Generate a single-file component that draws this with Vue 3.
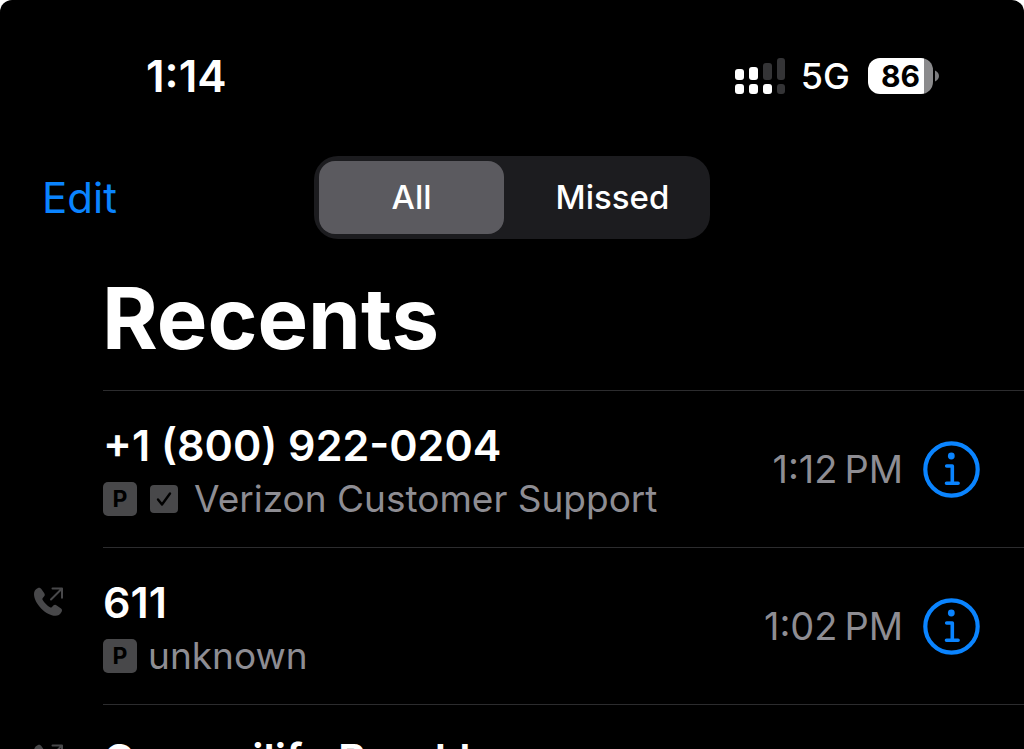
<template>
  <div class="phone">
    <!-- status bar -->
    <header class="status-bar">
      <span class="clock">1:14</span>
      <div class="status-icons">
        <svg class="signal" viewBox="0 0 50 36" role="img" aria-label="Signal strength">
          <rect x="0" y="11" width="9" height="11" rx="3" fill="#fff" />
          <rect x="14" y="9" width="9" height="13" rx="3" fill="#fff" />
          <rect x="28" y="5" width="9" height="17" rx="3" fill="#343436" />
          <rect x="42" y="0" width="8" height="22" rx="3" fill="#343436" />
          <rect x="0" y="26" width="9" height="10" rx="3" fill="#fff" />
          <rect x="14" y="26" width="9" height="10" rx="3" fill="#fff" />
          <rect x="28" y="26" width="9" height="10" rx="3" fill="#fff" />
          <rect x="42" y="26" width="8" height="10" rx="3" fill="#343436" />
        </svg>
        <span class="network">5G</span>
        <div class="battery">
          <span class="battery-level">86</span>
          <svg class="battery-tip" viewBox="0 0 4 12" aria-hidden="true">
            <path d="M0 0.5C2.4 1.4 4 3.5 4 6S2.4 10.6 0 11.5Z" fill="#7c7c7e" />
          </svg>
        </div>
      </div>
    </header>

    <nav class="toolbar">
      <button type="button" class="edit-button">Edit</button>
      <div class="segmented" role="group" aria-label="Filter calls">
        <button
          v-for="tab in tabs"
          :key="tab"
          type="button"
          class="segment"
          :class="{ active: activeTab === tab }"
          :aria-pressed="activeTab === tab"
          @click="activeTab = tab"
        >
          {{ tab }}
        </button>
      </div>
    </nav>

    <h1 class="title">Recents</h1>

    <!-- call list -->
    <ul class="call-list">
      <li v-for="call in visibleCalls" :key="call.name" class="call">
        <div class="direction">
          <svg v-if="call.outgoing" class="outgoing" viewBox="0 0 30 30" role="img" aria-label="Outgoing call">
            <path
              d="M0 7C0 4 1.5 2 4 1C5.5 .5 6.5 1 7.5 2.3L10.3 6.3C11 7.5 11 8.6 10 9.6L8.8 11C8.2 11.7 8.3 12.3 8.7 13C10 15.5 13.5 19 16 20.3C16.8 20.7 17.3 20.5 18 19.9L19.3 18.6C20.3 17.7 21.5 17.6 22.7 18.4L26.7 21.2C28.2 22.3 28.4 23.5 27.5 25C26 27.7 24 28.8 21.5 28.8C12 28.8 0 16.5 0 7Z"
              fill="#48484a"
            />
            <path
              d="M17 12.5L27.8 1.7M18.5 1.5H28V10.8"
              fill="none"
              stroke="#48484a"
              stroke-width="2"
              stroke-linecap="round"
              stroke-linejoin="round"
            />
          </svg>
        </div>
        <div class="call-body">
          <div class="call-info">
            <div class="call-name">{{ call.name }}</div>
            <div class="call-label">
              <span class="line-badge">P</span>
              <span v-if="call.verified" class="verified">
                <svg viewBox="0 0 28 28" role="img" aria-label="Verified">
                  <path
                    d="M8 14.5L12 19.5L20 8.5"
                    fill="none"
                    stroke="#000"
                    stroke-width="2.4"
                    stroke-linecap="round"
                    stroke-linejoin="round"
                  />
                </svg>
              </span>
              <span class="label-text">{{ call.label }}</span>
            </div>
          </div>
          <time class="call-time">{{ call.time }}</time>
          <button type="button" class="info-button" :aria-label="'Details for ' + call.name">
            <svg viewBox="0 0 57 57" aria-hidden="true">
              <circle cx="28.5" cy="28.5" r="26.2" fill="none" stroke="#0a84ff" stroke-width="4.2" />
              <circle cx="28.3" cy="15" r="3.4" fill="#0a84ff" />
              <path
                d="M23.7 25H29.3V42M23.5 42.3H35.1"
                fill="none"
                stroke="#0a84ff"
                stroke-width="3.6"
                stroke-linecap="round"
                stroke-linejoin="round"
              />
            </svg>
          </button>
        </div>
      </li>
    </ul>
  </div>
</template>

<script setup>
import { ref, computed } from "vue";

const tabs = ["All", "Missed"];
const activeTab = ref("All");

// thin space between the hour and AM/PM
const calls = ref([
  { name: "+1 (800) 922-0204", label: "Verizon Customer Support", time: "1:12\u2009PM", verified: true },
  { name: "611", label: "unknown", time: "1:02\u2009PM", outgoing: true },
  { name: "Comunilife Brooklyn", label: "unknown", time: "1:00\u2009PM", outgoing: true },
]);

const visibleCalls = computed(() =>
  activeTab.value === "All" ? calls.value : calls.value.filter((call) => call.missed)
);
</script>

<style>
body {
  margin: 0;
  background: #fff;
}
</style>

<style scoped>
.phone {
  display: flex;
  flex-direction: column;
  height: 100vh;
  overflow: hidden;
  border-radius: 12px 12px 0 0;
  background: #000;
  color: #fff;
  font-family: Inter, "Liberation Sans", sans-serif;
}

button {
  padding: 0;
  border: none;
  background: none;
  color: inherit;
  font-family: inherit;
  cursor: pointer;
}

.status-bar {
  display: flex;
  justify-content: space-between;
  align-items: center;
  padding: 49px 85px 53px 146px;
}

.clock {
  font-size: 44px;
  line-height: 54px;
  font-weight: 600;
}

.status-icons {
  display: flex;
  align-items: center;
}

.signal {
  width: 50px;
  height: 36px;
}

.network {
  margin: 0 18px 0 16px;
  font-size: 36px;
  line-height: 40px;
  font-weight: 500;
}

.battery {
  display: flex;
  align-items: center;
  gap: 2px;
}

.battery-level {
  width: 65px;
  border-radius: 12px;
  background: linear-gradient(to right, #fff 56px, #8a8a8c 56px);
  color: #000;
  font-size: 30px;
  line-height: 36px;
  font-weight: 700;
  text-align: center;
}

.battery-tip {
  width: 4px;
  height: 12px;
}

.toolbar {
  display: grid;
  grid-template-columns: 1fr auto 1fr;
  align-items: center;
  padding: 0 42px;
}

.edit-button {
  justify-self: start;
  color: #0a84ff;
  font-size: 42px;
  line-height: 54px;
}

.segmented {
  display: grid;
  grid-template-columns: 1fr 1fr;
  gap: 16px;
  padding: 5px;
  border-radius: 24px;
  background: #1c1c1f;
}

.segment {
  min-width: 185px;
  border-radius: 16px;
  font-size: 33px;
  line-height: 73px;
  font-weight: 500;
}

.segment.active {
  background: #5b5a5f;
}

.title {
  margin: 0;
  padding: 27px 40px 19px 102px;
  font-size: 85px;
  line-height: 105px;
  font-weight: 700;
}

.call-list {
  flex: 1;
  margin: 0;
  padding: 0;
  list-style: none;
  overflow-y: auto;
  scrollbar-width: none;
}

.call {
  display: flex;
}

.direction {
  flex: 0 0 103px;
  padding: 40px 0 0 34px;
  box-sizing: border-box;
}

.outgoing {
  display: block;
  width: 30px;
  height: 30px;
}

.call-body {
  flex: 1;
  display: flex;
  align-items: center;
  min-width: 0;
  padding-right: 44px;
  border-top: 1px solid #2c2c2e;
}

.call-info {
  flex: 1;
  min-width: 0;
  padding: 27px 0 21px;
}

.call-name {
  font-size: 43px;
  line-height: 54px;
  font-weight: 600;
  white-space: nowrap;
}

.call-label {
  display: flex;
  align-items: center;
  color: #8e8d93;
  font-size: 37px;
  line-height: 54px;
  white-space: nowrap;
}

.line-badge {
  width: 34px;
  border-radius: 5px;
  background: #48484a;
  color: #000;
  font-size: 23px;
  line-height: 34px;
  font-weight: 700;
  text-align: center;
}

.verified {
  width: 28px;
  height: 28px;
  margin-left: 13px;
  border-radius: 4px;
  background: #48484a;
}

.verified svg {
  display: block;
}

.label-text {
  margin-left: 11px;
}

.verified + .label-text {
  margin-left: 16px;
}

.call-time {
  color: #8e8d93;
  font-size: 38px;
  line-height: 54px;
  white-space: nowrap;
}

.info-button {
  width: 57px;
  height: 57px;
  margin-left: 20px;
}

.info-button svg {
  display: block;
}
</style>
